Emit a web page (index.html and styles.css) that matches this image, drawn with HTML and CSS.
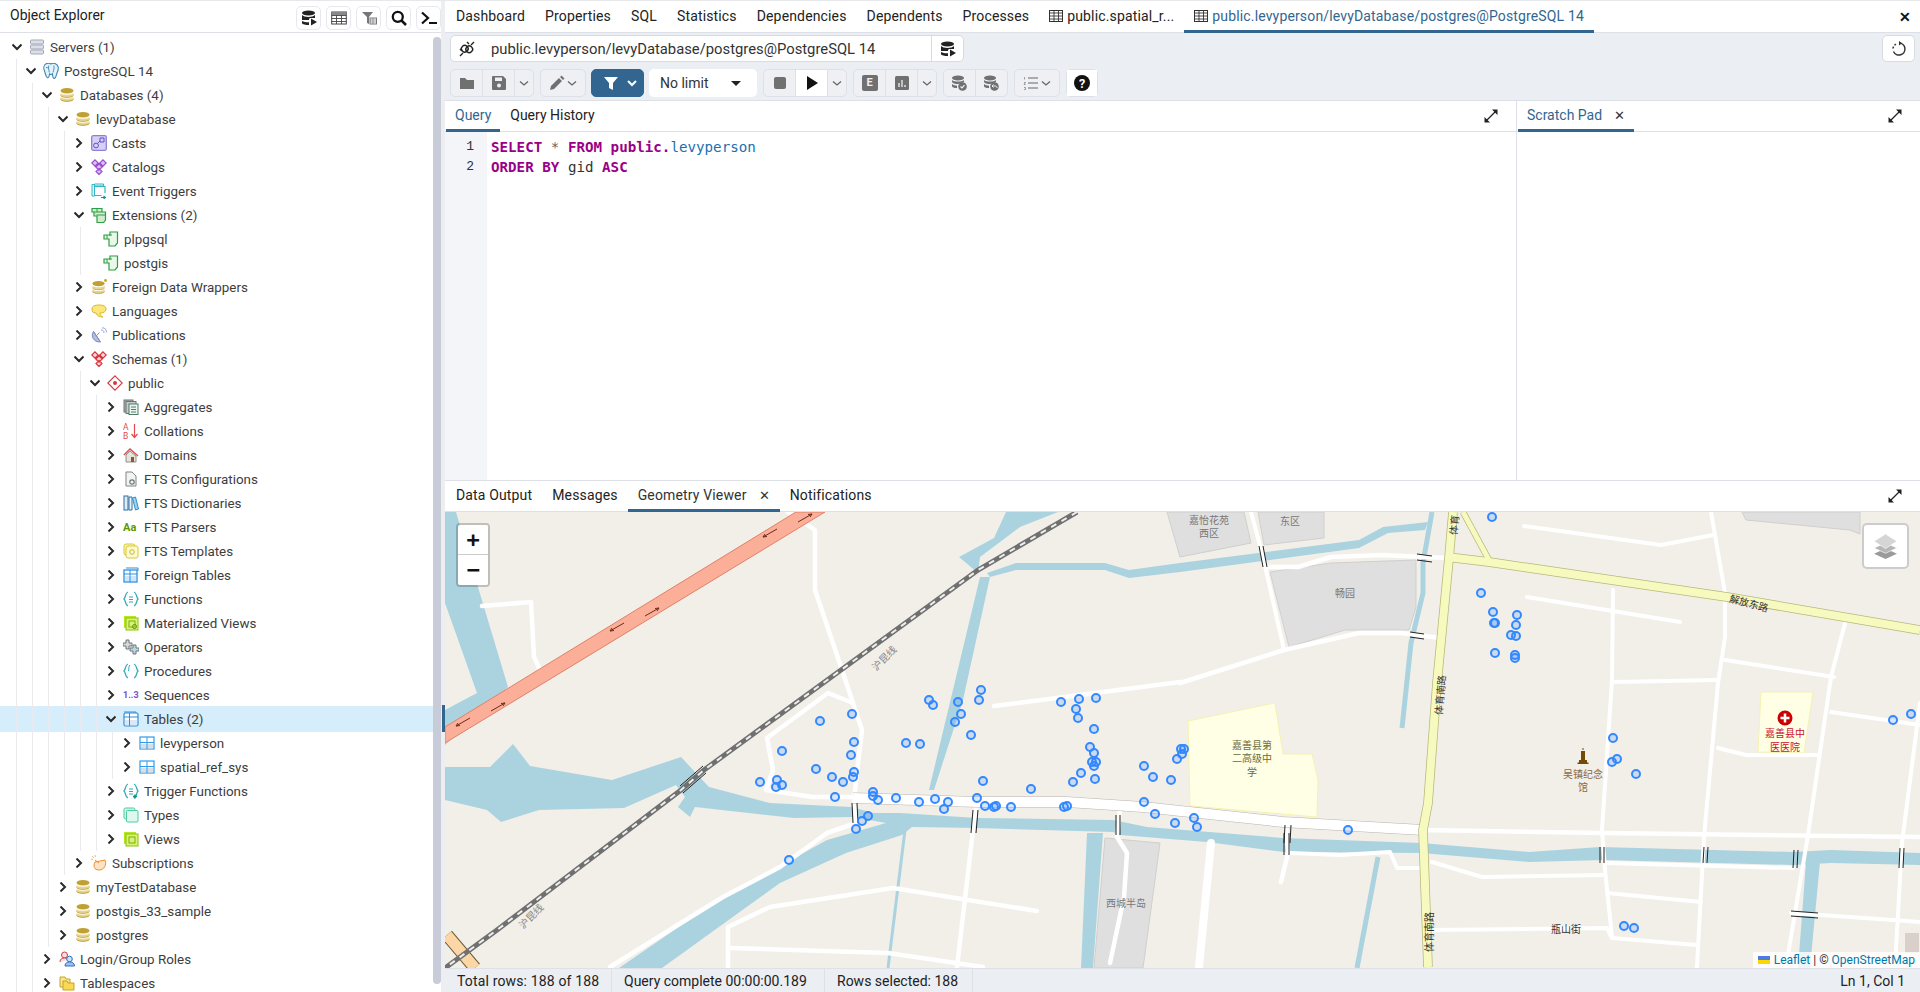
FILE: index.html
```html
<!DOCTYPE html>
<html lang="en">
<head>
    <meta charset="UTF-8">
    <title>pgAdmin 4</title>
    <link rel="stylesheet" href="styles.css">
</head>
<body>

<!-- shared icons -->
<svg class="defs" xmlns="http://www.w3.org/2000/svg">
    <symbol id="i-chev-d" viewBox="0 0 10 10"><path d="M.5 2.500L5 7l4.500-4.500" fill="none" stroke="#2b2b2b" stroke-width="2"/></symbol>
    <symbol id="i-chev-r" viewBox="0 0 10 10"><path d="M2.500.5L7 5 2.500 9.500" fill="none" stroke="#2b2b2b" stroke-width="2"/></symbol>
    <symbol id="i-servers" viewBox="0 0 16 16"><g fill="#dcdfe8" stroke="#a3a8b8"><rect x="1.500" y="1" width="13" height="4" rx="1"/><rect x="1.500" y="6" width="13" height="4" rx="1"/><rect x="1.500" y="11" width="13" height="4" rx="1"/></g></symbol>
    <symbol id="i-pg" viewBox="0 0 16 16"><path d="M3 .8C.8 1.800.3 5 1.500 8s1 5 2.500 6.300S6.300 13.500 6.500 11c1 .6 2.300.6 3 0 0 2 .6 5 2.200 4.300s1.300-3.300 2.300-5.300S16.200 4.500 14.200 2.200 9.800 0 8 .9C6.500.1 4.500 0 3 .8z" fill="#e3f2fb" stroke="#3f87b3" stroke-width="1.100"/><path d="M5.800 2.500c-.7 2.500 0 4.500.6 7M10.800 2.500c.7 2.500 0 4.500-.9 7M3 4.500c1 .2 2 .2 2.800 0" fill="none" stroke="#3f87b3" stroke-width=".9"/></symbol>
    <symbol id="i-db" viewBox="0 0 16 16"><path d="M1.500 5.500v2c0 3 13 3 13 0v-2c0 3-13 3-13 0zM1.500 9.500v2.500c0 3 13 3 13 0V9.500c0 3-13 3-13 0z" fill="#e6d48a"/><ellipse cx="8" cy="3.800" rx="6.500" ry="2.800" fill="#bfa032"/><path d="M1.500 8.500c1.500 2.400 11.500 2.400 13 0" fill="none" stroke="#bfa032"/><path d="M1.500 12.500c1.500 2.400 11.500 2.400 13 0" fill="none" stroke="#bfa032"/></symbol>
    <symbol id="i-casts" viewBox="0 0 16 16"><rect x=".7" y=".7" width="14.600" height="14.600" rx="1.500" fill="#d7d0f5" stroke="#8d7fd9" stroke-width="1.300"/><circle cx="5" cy="10.500" r="2.400" fill="none" stroke="#5e4fc0"/><path d="M9 3h4v4H9zM6.500 8.500L9 6" fill="none" stroke="#5e4fc0"/></symbol>
    <symbol id="i-catalogs" viewBox="0 0 16 16"><g fill="#dcc0f4" stroke="#9a4fd0" stroke-width="1.200"><path d="M4 .8l3.200 3.200L4 7.200.8 4zM12 .8l3.200 3.200L12 7.200 8.800 4zM8 4.800l3.200 3.200L8 11.200 4.800 8zM8 9.500l3 3-3 3-3-3z"/></g></symbol>
    <symbol id="i-trigger" viewBox="0 0 16 16"><path d="M3.500 1h9v2H3.500zM1 1.500h2.500V13H1z" fill="#e6f8fa" stroke="#2fb7c7"/><path d="M3.500 3.500h10.500V10M3.500 12.500h7" fill="none" stroke="#2fb7c7" stroke-width="1.200"/><path d="M10 14.500h4M12.500 13l2 1.500-2 1.500" fill="none" stroke="#1f8f9d" stroke-width="1.100"/></symbol>
    <symbol id="i-ext" viewBox="0 0 16 16"><path d="M1 1.500h10v3.500H1zM3 5h11.500v8l-2 2.500H6V9H3z" fill="#cfeccf" stroke="#2f9e44" stroke-width="1.200"/><path d="M6 1.500V5M5.500 8h9" stroke="#2f9e44" fill="none"/></symbol>
    <symbol id="i-extone" viewBox="0 0 16 16"><path d="M1 4h6V1h7.500v11L12 15H6V8H1z" fill="#eaf8ea" stroke="#2f9e44" stroke-width="1.200"/><path d="M4 4v4M6 4h3" stroke="#2f9e44" fill="none"/></symbol>
    <symbol id="i-fdw" viewBox="0 0 16 16"><use href="#i-db" x="0" y="1" width="15" height="15"/><circle cx="14.500" cy="1.500" r="1.400" fill="#c9a227"/></symbol>
    <symbol id="i-lang" viewBox="0 0 16 16"><path d="M1 6c0-3 3-4 7-4s7 1 7 4-3 4-6 4c0 2 1 3 3 4-3 0-6-1-7-4-3 0-4-1-4-4z" fill="#fbe77a" stroke="#d9b92a"/></symbol>
    <symbol id="i-pub" viewBox="0 0 16 16"><path d="M2.500 4.500C-.5 9 2.500 15.500 9.500 15z" fill="#b4bde0" stroke="#7f8cc4"/><path d="M2.500 4.500l7 10.500M5.500 8.500L8.500 5.500" stroke="#7f8cc4" fill="none"/><path d="M10 3c2 0 3 1 3 3M11 .8c3 0 4.500 1.500 4.500 4.500" fill="none" stroke="#9aa5d6"/></symbol>
    <symbol id="i-schemas" viewBox="0 0 16 16"><g fill="#fbd4d4" stroke="#d9363e" stroke-width="1.200"><path d="M4 .8l3.200 3.200L4 7.200.8 4zM12 .8l3.200 3.200L12 7.200 8.800 4zM8 4.800l3.200 3.200L8 11.200 4.800 8zM8 9.500l3 3-3 3-3-3z"/></g></symbol>
    <symbol id="i-public" viewBox="0 0 16 16"><path d="M8 .8L15.200 8 8 15.200.8 8z" fill="#fff" stroke="#d9363e" stroke-width="1.100"/><circle cx="8" cy="8" r="2" fill="#d9363e"/></symbol>
    <symbol id="i-agg" viewBox="0 0 16 16"><rect x="1" y="1" width="9" height="12" fill="#aeb4b4" stroke="#6b7474"/><rect x="3" y="2.500" width="10" height="12" fill="#c6cbcb" stroke="#6b7474"/><rect x="6" y="5" width="9" height="10.500" fill="#eef5ee" stroke="#4a7d6a"/><path d="M8 8h5M8 10.500h5M8 13h5" stroke="#4a7d6a"/></symbol>
    <symbol id="i-coll" viewBox="0 0 16 16"><text x="0" y="7" font-family="Roboto" font-size="8.500" fill="#e5484d">A</text><text x="0" y="15.500" font-family="Roboto" font-size="8.500" fill="#e5484d">B</text><path d="M11.500 1v13M8.500 11l3 3.500 3-3.500" fill="none" stroke="#e5484d" stroke-width="1.200"/></symbol>
    <symbol id="i-domain" viewBox="0 0 16 16"><path d="M1 8l6-6 8 7" fill="none" stroke="#d9534f" stroke-width="1.500"/><path d="M3 8l4-4 6 5v6H3z" fill="#e7e3da" stroke="#8f8f8f"/><rect x="8" y="10" width="3" height="5" fill="#8a5a2b"/></symbol>
    <symbol id="i-ftsconf" viewBox="0 0 16 16"><path d="M3 1h6l4 4v10H3z" fill="#f2f3f3" stroke="#7d8587"/><circle cx="9" cy="11" r="2.200" fill="none" stroke="#6d7577" stroke-width="1.200"/></symbol>
    <symbol id="i-ftsdict" viewBox="0 0 16 16"><rect x="1" y="1" width="4" height="14" fill="#dcecf7" stroke="#2f6f9f"/><path d="M6 2h3v13H6z" fill="#eef6fb" stroke="#2f6f9f"/><path d="M9.500 3l3-1 3 12-3 1z" fill="#9fd0ee" stroke="#2f8fc4"/></symbol>
    <symbol id="i-parser" viewBox="0 0 16 16"><text x="0" y="12" font-family="Roboto" font-weight="700" font-size="11" fill="#5c9a00">Aa</text></symbol>
    <symbol id="i-ftstpl" viewBox="0 0 16 16"><rect x="1" y="1" width="11" height="11" rx="2" fill="#fbf4b8" stroke="#d8c93a"/><rect x="3" y="3" width="12" height="12" rx="2" fill="#fdf9d0" stroke="#d8c93a"/><circle cx="9" cy="9" r="2.300" fill="none" stroke="#c9b92a"/></symbol>
    <symbol id="i-ftable" viewBox="0 0 16 16"><path d="M3 1h12v3" fill="none" stroke="#2f8fe0"/><rect x="1" y="3" width="13" height="12" fill="#fff" stroke="#2f8fe0" stroke-width="1.300"/><rect x="2" y="9" width="11" height="5" fill="#cfe6fa"/><path d="M1 7h13M7 3v12" stroke="#2f8fe0"/></symbol>
    <symbol id="i-func" viewBox="0 0 16 16"><path d="M5 1C2 2 3 6 1 8c2 2 1 6 4 7M11 1c3 1 2 5 4 7-2 2-1 6-4 7" fill="none" stroke="#2fa7b8" stroke-width="1.200"/><path d="M6 6h4M6 8.500h4M6 11h4" stroke="#2fa7b8"/></symbol>
    <symbol id="i-proc" viewBox="0 0 16 16"><path d="M5 1C2 2 3 6 1 8c2 2 1 6 4 7M11 1c3 1 2 5 4 7-2 2-1 6-4 7" fill="none" stroke="#2fa7b8" stroke-width="1.200"/><path d="M7 2C5.500 3 6 6 5.500 8" fill="none" stroke="#2fa7b8"/></symbol>
    <symbol id="i-tfunc" viewBox="0 0 16 16"><use href="#i-func"/><path d="M12 11.500v4M10 13.500h4" stroke="#0f8f7f" stroke-width="1.500"/></symbol>
    <symbol id="i-mview" viewBox="0 0 16 16"><rect x="1" y="1" width="12" height="12" fill="#b6e61e"/><rect x="3" y="3" width="12" height="12" fill="#d7f27a" stroke="#8fc400"/><rect x="6" y="6" width="6" height="6" fill="none" stroke="#7bb000"/><circle cx="11.500" cy="11.500" r="2" fill="none" stroke="#5f8f00"/></symbol>
    <symbol id="i-ops" viewBox="0 0 16 16"><path d="M3 1h3v3h3v3H6v3H3V7H0V4h3z" fill="#d5d8d8" stroke="#6e7676"/><path d="M10 6h3v3h3v3h-3v3h-3v-3H7V9h3z" fill="#b9d6e4" stroke="#6e7676"/></symbol>
    <symbol id="i-seq" viewBox="0 0 16 16"><text x="0" y="11" font-family="Roboto" font-size="9" font-weight="700" fill="#7a4fd0">1..3</text></symbol>
    <symbol id="i-tables" viewBox="0 0 16 16"><path d="M1 1h12v2" fill="none" stroke="#2f8fe0"/><rect x="1" y="2" width="14" height="13" rx="1.500" fill="#fff" stroke="#2f8fe0" stroke-width="1.200"/><rect x="2" y="9" width="12" height="5" fill="#dbe9f6"/><path d="M1 6h14M6.500 2v13" stroke="#2f8fe0"/></symbol>
    <symbol id="i-table" viewBox="0 0 16 16"><rect x="1" y="2" width="14" height="12" fill="#fff" stroke="#2f9be8" stroke-width="1.200"/><rect x="2" y="9" width="12" height="4.500" fill="#d9dee6"/><path d="M1 7.500h14M8 2v12" stroke="#2f9be8"/></symbol>
    <symbol id="i-types" viewBox="0 0 16 16"><rect x="1" y="1" width="11" height="11" rx="1.500" fill="#cdf3e2" stroke="#4fcba0"/><rect x="3.500" y="3.500" width="11.500" height="11.500" rx="1" fill="#dff8ed" stroke="#4fcba0"/></symbol>
    <symbol id="i-views" viewBox="0 0 16 16"><rect x="1" y="1" width="12" height="12" fill="#b6e61e"/><rect x="3" y="3" width="12" height="12" fill="#d7f27a" stroke="#8fc400"/><rect x="6" y="6" width="6" height="6" fill="none" stroke="#7bb000"/></symbol>
    <symbol id="i-subs" viewBox="0 0 16 16"><path d="M4 7l10-2c2 5-1 10-6 10S2 11 4 7z" fill="#fde3c4" stroke="#ee8e33"/><path d="M8 8l-4-3" stroke="#ee8e33"/><path d="M1 1l2 2M4 0l.5 2M0 4l2 .5" stroke="#f3b46f"/></symbol>
    <symbol id="i-roles" viewBox="0 0 16 16"><circle cx="5.500" cy="4" r="3" fill="#fbe0e0" stroke="#d9363e"/><path d="M1 11c0-3 2-4 4.500-4S9 8 9 9" fill="#fbe0e0" stroke="#d9363e"/><circle cx="10.500" cy="8" r="2.800" fill="#cfe3f7" stroke="#2f6fc4"/><path d="M6 15c0-3 2-4 4.500-4s5 1 5 4z" fill="#9cc4ee" stroke="#2f6fc4"/></symbol>
    <symbol id="i-tspace" viewBox="0 0 16 16"><path d="M1 2h5l1 2h4v8H1z" fill="#f9e58a" stroke="#c9a227"/><path d="M4 6h4l1 2h6v7H4z" fill="#f6d955" stroke="#c9a227"/></symbol>

    <symbol id="t-dbrun" viewBox="0 0 16 16"><ellipse cx="7.500" cy="3" rx="6.500" ry="2.500" fill="#222"/><path d="M1 5c2 2.500 11 2.500 13 0v3H9l-1 1v1H1zM1 11c2 1 5 1.400 7 1.200V15c-3 0-7-.5-7-2z" fill="#222"/><path d="M10 8.500l6 3.500-6 3.500z" fill="#222"/></symbol>
    <symbol id="t-grid" viewBox="0 0 16 16"><rect x=".7" y="2" width="14.600" height="12" fill="none" stroke="#444"/><path d="M.7 5.500h14.600M.7 8.500h14.600M.7 11.500h14.600M5.500 2v12M10.500 2v12" stroke="#444" stroke-width=".9"/><rect x=".7" y="2" width="14.600" height="3" fill="#888"/></symbol>
    <symbol id="t-filter" viewBox="0 0 16 16"><path d="M1 2h11L8 7v7l-2-1V7z" fill="#777"/><rect x="9" y="8" width="6.500" height="6" fill="#fff" stroke="#777"/><path d="M9 10h6.500M9 12h6.500M12 8v6" stroke="#777" stroke-width=".7"/></symbol>
    <symbol id="t-search" viewBox="0 0 16 16"><circle cx="6.800" cy="6.800" r="5" fill="none" stroke="#111" stroke-width="2.300"/><path d="M10.500 10.500l4.500 4.500" stroke="#111" stroke-width="2.500"/></symbol>
    <symbol id="t-psql" viewBox="0 0 16 16"><path d="M1 2.500L7 8l-6 5.500" fill="none" stroke="#111" stroke-width="2.200"/><path d="M8 13h8" stroke="#111" stroke-width="2"/></symbol>
    <symbol id="t-plug" viewBox="0 0 16 16"><g fill="none" stroke="#222" stroke-width="1.400"><path d="M1 15l3-3M15 1l-3 3"/><rect x="2.500" y="4.500" width="6.500" height="6.500" rx="3" transform="rotate(-45 5.750 7.750)"/><rect x="7" y="5" width="6.500" height="6.500" rx="3" transform="rotate(-45 10.250 8.250)"/><path d="M1 8l2 2M8 1l2 2"/></g></symbol>
    <symbol id="t-folder" viewBox="0 0 16 16"><path d="M1 3h5l2 2h7v9H1z" fill="#707070"/></symbol>
    <symbol id="t-save" viewBox="0 0 16 16"><path d="M2 1h10l3 3v10a1 1 0 0 1-1 1H2a1 1 0 0 1-1-1V2a1 1 0 0 1 1-1z" fill="#707070"/><rect x="4" y="2.500" width="7" height="3.500" fill="#eef0f4"/><circle cx="8" cy="10.500" r="2" fill="#eef0f4"/></symbol>
    <symbol id="t-caret" viewBox="0 0 10 10"><path d="M1 3.500l4 3.500 4-3.500" fill="none" stroke="#666" stroke-width="1.300"/></symbol>
    <symbol id="t-pencil" viewBox="0 0 16 16"><path d="M1 15l1-4 8-8 3 3-8 8zM11 2l1.500-1.500L15.500 3.500 14 5z" fill="#707070"/></symbol>
    <symbol id="t-funnel" viewBox="0 0 16 16"><path d="M1 2h14l-5 6v7l-4-2V8z" fill="#fff"/></symbol>
    <symbol id="t-chart" viewBox="0 0 16 16"><rect x="1" y="1" width="14" height="14" rx="1.500" fill="#707070"/><path d="M5 8v4M8 5v7M11 10v2" stroke="#eef0f4" stroke-width="1.300"/></symbol>
    <symbol id="t-dbok" viewBox="0 0 16 16"><ellipse cx="7" cy="3" rx="6" ry="2.500" fill="#707070"/><path d="M1 5c2 2 10 2 12 0v2c-2 1-5 2-6 2-3 0-5-.6-6-2zM1 9c1.500 1.200 3 1.500 5 1.500V13c-3 0-5-.6-5-2z" fill="#707070"/><circle cx="11.500" cy="11.500" r="4.300" fill="#707070"/><path d="M9.500 11.500l1.500 1.500 2.500-2.800" fill="none" stroke="#eef0f4" stroke-width="1.200"/></symbol>
    <symbol id="t-dbundo" viewBox="0 0 16 16"><ellipse cx="7" cy="3" rx="6" ry="2.500" fill="#707070"/><path d="M1 5c2 2 10 2 12 0v2c-2 1-5 2-6 2-3 0-5-.6-6-2zM1 9c1.500 1.200 3 1.500 5 1.500V13c-3 0-5-.6-5-2z" fill="#707070"/><circle cx="11.500" cy="11.500" r="4.300" fill="#707070"/><path d="M9 11h3.500c1 0 1.500.8 1.500 2M9 11l1.500-1.500M9 11l1.500 1.500" fill="none" stroke="#eef0f4"/></symbol>
    <symbol id="t-list" viewBox="0 0 16 16"><path d="M5 3h10M5 8h10M5 13h10" stroke="#666" stroke-width="1.100"/><path d="M1.500 2v2.500M1 7.500h1.500L1 9.500h1.500M1 12.500h1.500v2H1" fill="none" stroke="#666" stroke-width=".6"/></symbol>
    <symbol id="t-help" viewBox="0 0 16 16"><circle cx="8" cy="8" r="8" fill="#111"/><text x="8" y="12.500" text-anchor="middle" font-family="Roboto" font-weight="700" font-size="12.500" fill="#fff">?</text></symbol>
    <symbol id="t-refresh" viewBox="0 0 16 16"><path d="M8 2a6 6 0 1 1-5.500 8.500" fill="none" stroke="#333" stroke-width="1.500"/><path d="M2 7.500a6 6 0 0 1 3-4.500" fill="none" stroke="#333" stroke-width="1.500" stroke-dasharray="2 1.500"/><path d="M8 0l3 2.200L8 4.500z" fill="#333"/></symbol>
    <symbol id="t-expand" viewBox="0 0 16 16"><path d="M3 13L13 3" stroke="#222" stroke-width="1.300"/><path d="M9 1.500h5.500V7zM1.500 9v5.500H7z" fill="#222"/></symbol>
    <symbol id="t-tabgrid" viewBox="0 0 14 14"><rect x=".5" y="1.500" width="13" height="11" fill="none" stroke="#333"/><path d="M.5 4h13M.5 7h13M.5 10h13M5 1.500v11M9.500 1.500v11" stroke="#333" stroke-width=".9"/></symbol>
</svg>

<div class="app">
    <!-- left panel -->
    <aside class="explorer">
        <div class="explorer-head">
            <span class="explorer-title">Object Explorer</span>
            <div class="explorer-tools">
                <button class="tool"><svg><use href="#t-dbrun"/></svg></button>
                <button class="tool"><svg><use href="#t-grid"/></svg></button>
                <button class="tool"><svg><use href="#t-filter"/></svg></button>
                <button class="tool"><svg><use href="#t-search"/></svg></button>
                <button class="tool"><svg><use href="#t-psql"/></svg></button>
            </div>
        </div>
        <div class="explorer-body">
            <div class="tree">
                <div class="row lv0"><svg class="chev"><use href="#i-chev-d"/></svg><svg class="ico"><use href="#i-servers"/></svg>Servers (1)</div>
                <div class="row lv1"><svg class="chev"><use href="#i-chev-d"/></svg><svg class="ico"><use href="#i-pg"/></svg>PostgreSQL 14</div>
                <div class="row lv2"><svg class="chev"><use href="#i-chev-d"/></svg><svg class="ico"><use href="#i-db"/></svg>Databases (4)</div>
                <div class="row lv3"><svg class="chev"><use href="#i-chev-d"/></svg><svg class="ico"><use href="#i-db"/></svg>levyDatabase</div>
                <div class="row lv4"><svg class="chev"><use href="#i-chev-r"/></svg><svg class="ico"><use href="#i-casts"/></svg>Casts</div>
                <div class="row lv4"><svg class="chev"><use href="#i-chev-r"/></svg><svg class="ico"><use href="#i-catalogs"/></svg>Catalogs</div>
                <div class="row lv4"><svg class="chev"><use href="#i-chev-r"/></svg><svg class="ico"><use href="#i-trigger"/></svg>Event Triggers</div>
                <div class="row lv4"><svg class="chev"><use href="#i-chev-d"/></svg><svg class="ico"><use href="#i-ext"/></svg>Extensions (2)</div>
                <div class="row leaf"><svg class="ico"><use href="#i-extone"/></svg>plpgsql</div>
                <div class="row leaf"><svg class="ico"><use href="#i-extone"/></svg>postgis</div>
                <div class="row lv4"><svg class="chev"><use href="#i-chev-r"/></svg><svg class="ico"><use href="#i-fdw"/></svg>Foreign Data Wrappers</div>
                <div class="row lv4"><svg class="chev"><use href="#i-chev-r"/></svg><svg class="ico"><use href="#i-lang"/></svg>Languages</div>
                <div class="row lv4"><svg class="chev"><use href="#i-chev-r"/></svg><svg class="ico"><use href="#i-pub"/></svg>Publications</div>
                <div class="row lv4"><svg class="chev"><use href="#i-chev-d"/></svg><svg class="ico"><use href="#i-schemas"/></svg>Schemas (1)</div>
                <div class="row lv5"><svg class="chev"><use href="#i-chev-d"/></svg><svg class="ico"><use href="#i-public"/></svg>public</div>
                <div class="row lv6"><svg class="chev"><use href="#i-chev-r"/></svg><svg class="ico"><use href="#i-agg"/></svg>Aggregates</div>
                <div class="row lv6"><svg class="chev"><use href="#i-chev-r"/></svg><svg class="ico"><use href="#i-coll"/></svg>Collations</div>
                <div class="row lv6"><svg class="chev"><use href="#i-chev-r"/></svg><svg class="ico"><use href="#i-domain"/></svg>Domains</div>
                <div class="row lv6"><svg class="chev"><use href="#i-chev-r"/></svg><svg class="ico"><use href="#i-ftsconf"/></svg>FTS Configurations</div>
                <div class="row lv6"><svg class="chev"><use href="#i-chev-r"/></svg><svg class="ico"><use href="#i-ftsdict"/></svg>FTS Dictionaries</div>
                <div class="row lv6"><svg class="chev"><use href="#i-chev-r"/></svg><svg class="ico"><use href="#i-parser"/></svg>FTS Parsers</div>
                <div class="row lv6"><svg class="chev"><use href="#i-chev-r"/></svg><svg class="ico"><use href="#i-ftstpl"/></svg>FTS Templates</div>
                <div class="row lv6"><svg class="chev"><use href="#i-chev-r"/></svg><svg class="ico"><use href="#i-ftable"/></svg>Foreign Tables</div>
                <div class="row lv6"><svg class="chev"><use href="#i-chev-r"/></svg><svg class="ico"><use href="#i-func"/></svg>Functions</div>
                <div class="row lv6"><svg class="chev"><use href="#i-chev-r"/></svg><svg class="ico"><use href="#i-mview"/></svg>Materialized Views</div>
                <div class="row lv6"><svg class="chev"><use href="#i-chev-r"/></svg><svg class="ico"><use href="#i-ops"/></svg>Operators</div>
                <div class="row lv6"><svg class="chev"><use href="#i-chev-r"/></svg><svg class="ico"><use href="#i-proc"/></svg>Procedures</div>
                <div class="row lv6"><svg class="chev"><use href="#i-chev-r"/></svg><svg class="ico"><use href="#i-seq"/></svg>Sequences</div>
                <div class="row lv6 selected"><svg class="chev"><use href="#i-chev-d"/></svg><svg class="ico"><use href="#i-tables"/></svg>Tables (2)</div>
                <div class="row lv7"><svg class="chev"><use href="#i-chev-r"/></svg><svg class="ico"><use href="#i-table"/></svg>levyperson</div>
                <div class="row lv7"><svg class="chev"><use href="#i-chev-r"/></svg><svg class="ico"><use href="#i-table"/></svg>spatial_ref_sys</div>
                <div class="row lv6"><svg class="chev"><use href="#i-chev-r"/></svg><svg class="ico"><use href="#i-tfunc"/></svg>Trigger Functions</div>
                <div class="row lv6"><svg class="chev"><use href="#i-chev-r"/></svg><svg class="ico"><use href="#i-types"/></svg>Types</div>
                <div class="row lv6"><svg class="chev"><use href="#i-chev-r"/></svg><svg class="ico"><use href="#i-views"/></svg>Views</div>
                <div class="row lv4"><svg class="chev"><use href="#i-chev-r"/></svg><svg class="ico"><use href="#i-subs"/></svg>Subscriptions</div>
                <div class="row lv3"><svg class="chev"><use href="#i-chev-r"/></svg><svg class="ico"><use href="#i-db"/></svg>myTestDatabase</div>
                <div class="row lv3"><svg class="chev"><use href="#i-chev-r"/></svg><svg class="ico"><use href="#i-db"/></svg>postgis_33_sample</div>
                <div class="row lv3"><svg class="chev"><use href="#i-chev-r"/></svg><svg class="ico"><use href="#i-db"/></svg>postgres</div>
                <div class="row lv2"><svg class="chev"><use href="#i-chev-r"/></svg><svg class="ico"><use href="#i-roles"/></svg>Login/Group Roles</div>
                <div class="row lv2"><svg class="chev"><use href="#i-chev-r"/></svg><svg class="ico"><use href="#i-tspace"/></svg>Tablespaces</div>
            </div>
            <div class="scroll-thumb"></div>
        </div>
    </aside>

    <div class="splitter"><div class="splitter-mark"></div></div>

    <main class="main">
        <nav class="tabs top-tabs">
            <span class="tab">Dashboard</span>
            <span class="tab">Properties</span>
            <span class="tab">SQL</span>
            <span class="tab">Statistics</span>
            <span class="tab">Dependencies</span>
            <span class="tab">Dependents</span>
            <span class="tab">Processes</span>
            <span class="tab"><svg class="tab-ico"><use href="#t-tabgrid"/></svg>public.spatial_r...</span>
            <span class="tab active"><svg class="tab-ico"><use href="#t-tabgrid"/></svg>public.levyperson/levyDatabase/postgres@PostgreSQL 14</span>
            <span class="top-close">✕</span>
        </nav>

        <div class="toolbars">
            <div class="conn-row">
                <div class="conn">
                    <button class="btn conn-btn"><svg class="i16"><use href="#t-plug"/></svg></button>
                    <span class="conn-name">public.levyperson/levyDatabase/postgres@PostgreSQL 14</span>
                    <button class="btn conn-btn right"><svg class="i16"><use href="#t-dbrun"/></svg></button>
                </div>
                <button class="btn refresh"><svg class="i16"><use href="#t-refresh"/></svg></button>
            </div>
            <div class="tool-row">
                <div class="group g1">
                    <button class="btn"><svg class="i16"><use href="#t-folder"/></svg></button>
                    <button class="btn"><svg class="i16"><use href="#t-save"/></svg></button>
                    <button class="btn caret"><svg class="i10"><use href="#t-caret"/></svg></button>
                </div>
                <div class="group g2">
                    <button class="btn wide"><svg class="i16"><use href="#t-pencil"/></svg><svg class="i10"><use href="#t-caret"/></svg></button>
                </div>
                <div class="group g3 blue">
                    <svg class="i16"><use href="#t-funnel"/></svg>
                    <svg class="i10" viewBox="0 0 10 10"><path d="M1 3l4 4 4-4" fill="none" stroke="#fff" stroke-width="2"/></svg>
                </div>
                <div class="limit">No limit<span class="limit-caret"></span></div>
                <div class="group g4">
                    <button class="btn"><span class="stop"></span></button>
                    <button class="btn lit"><svg class="i16" viewBox="0 0 16 16"><path d="M3 1l11 7-11 7z" fill="#111"/></svg></button>
                    <button class="btn caret"><svg class="i10"><use href="#t-caret"/></svg></button>
                </div>
                <div class="group g5">
                    <button class="btn"><span class="e-box">E</span></button>
                    <button class="btn"><svg class="i16"><use href="#t-chart"/></svg></button>
                    <button class="btn caret"><svg class="i10"><use href="#t-caret"/></svg></button>
                </div>
                <div class="group g6">
                    <button class="btn"><svg class="i16"><use href="#t-dbok"/></svg></button>
                    <button class="btn"><svg class="i16"><use href="#t-dbundo"/></svg></button>
                </div>
                <div class="group g7">
                    <button class="btn wide"><svg class="i16"><use href="#t-list"/></svg><svg class="i10"><use href="#t-caret"/></svg></button>
                </div>
                <div class="group g8 lit">
                    <button class="btn lit"><svg class="i16"><use href="#t-help"/></svg></button>
                </div>
            </div>
        </div>

        <section class="query-area">
            <div class="query-pane">
                <div class="tabs pane-tabs">
                    <span class="tab active">Query</span>
                    <span class="tab">Query History</span>
                    <svg class="expand"><use href="#t-expand"/></svg>
                </div>
                <div class="editor">
                    <div class="gutter"><div>1</div><div>2</div></div>
                    <pre class="code"><span class="kw">SELECT</span> <span class="op">*</span> <span class="kw">FROM</span> <span class="kw">public</span><span class="kw">.</span><span class="id">levyperson</span>
<span class="kw">ORDER BY</span> gid <span class="kw">ASC</span></pre>
                </div>
            </div>
            <div class="scratch-pane">
                <div class="tabs pane-tabs">
                    <span class="tab active">Scratch Pad<span class="tab-x">✕</span></span>
                    <svg class="expand"><use href="#t-expand"/></svg>
                </div>
            </div>
        </section>

        <section class="result-area">
            <div class="tabs pane-tabs result-tabs">
                <span class="tab">Data Output</span>
                <span class="tab">Messages</span>
                <span class="tab active">Geometry Viewer<span class="tab-x">✕</span></span>
                <span class="tab">Notifications</span>
                <svg class="expand"><use href="#t-expand"/></svg>
            </div>
            <div class="map">
                <svg class="map-svg" viewBox="445 512 1475 456" xmlns="http://www.w3.org/2000/svg">
                    <rect x="445" y="512" width="1475" height="456" fill="#f2efe9"/>
                    <!-- landuse -->
                    <g class="residential">
                        <path d="M1167 512L1180 557 1251 543 1244 512z"/>
                        <path d="M1258 512H1324V538L1264 545z"/>
                        <path d="M1270 572L1331 563 1416 560V607L1409 630H1345L1289 647z"/>
                        <path d="M1742 512L1746 520 1850 530 1860 534V512z"/>
                        <path d="M1105 838L1160 843 1143 968H1094z"/>
                    </g>
                    <g class="campus">
                        <path d="M1188 721L1275 703 1283 754H1312L1318 780 1317 817 1190 806z"/>
                        <path d="M1761 692H1813L1804 753 1758 752z"/>
                    </g>
                    <rect x="1905" y="933" width="14" height="20" fill="#d9d0c9"/>
                    <!-- water -->
                    <g class="water">
                        <path d="M445 512H456L478 587 508 687 445 745V710L477 693 445 603z"/>
                        <path d="M445 767H490L513 744 530 766 612 780 681 757 709 787 770 803 851 807 874 813 900 813 977 818 1113 820 1147 827 1283 838 1421 843 1529 852 1600 847 1793 852 1831 850 1920 853V865L1831 863 1793 865 1605 860 1529 862 1421 853 1284 852 1207 842 1120 835 1113 832 977 828 912 827 902 835 846 853 780 883 662 968H619L718 900 827 840 886 823 853 817 794 818 695 807 690 817 678 807 685 797 676 785 624 808 539 810 501 822 487 810 445 800z"/>
                        <path d="M1087 833H1103L1093 968H1081z"/>
                        <path d="M1806 862H1820L1810 968H1798z"/>
                        <path d="M980 577H990L963 700 934 790 929 790z"/>
                        <path d="M1006 512L994 538 959 557 978 573 980 557 1020 527 1058 512z"/>
                        <path d="M987 573L1016 563H1105L1129 570 1180 563 1359 540 1383 527 1428 522 1425 530 1388 533 1359 548 1180 572 1129 578 1105 570H1016L990 577z"/>
                    </g>
                    <g class="stream">
                        <path d="M1432 512L1423 563V593L1411 643 1402 728" stroke-width="5"/>
                        <path d="M905 830L888 968" stroke-width="3"/>
                        <path d="M1378 857L1357 968" stroke-width="5"/>
                    </g>
                    <!-- roads -->
                    <g class="road w5">
                        <path d="M788 512L815 530V590L842 670 853 703 862 730 858 763 854 800 856 823"/>
                        <path d="M856 823L827 833 780 867 723 897 610 967"/>
                        <path d="M482 606L531 602 534 657 540 670"/>
                        <path d="M853 703L828 693 767 738 773 770 766 790 813 797H853"/>
                        <path d="M1267 567H1298L1331 557 1383 555 1447 558"/>
                        <path d="M1180 683L1284 650 1359 633H1402L1440 638"/>
                        <path d="M994 706L1180 682"/>
                        <path d="M976 807L973 830 957 967"/>
                        <path d="M1120 810L1117 837 1127 853 1124 897 1110 963"/>
                        <path d="M728 967V927L770 907 893 888 1037 911"/>
                        <path d="M730 948L888 953 983 967"/>
                        <path d="M1286 827L1288 853 1281 882"/>
                        <path d="M1423 830L1605 833 1920 837"/>
                    </g>
                    <g class="road w4">
                        <path d="M1251 512L1263 557 1284 650"/>
                        <path d="M1524 526L1661 545 1713 535"/>
                        <path d="M1527 597L1680 622"/>
                        <path d="M1711 512L1725 593V637L1718 683 1704 837 1697 967"/>
                        <path d="M1613 590L1612 680 1602 830 1605 870 1612 937"/>
                        <path d="M1614 682L1718 680"/>
                        <path d="M1725 660L1834 677"/>
                        <path d="M1845 623L1831 677 1808 835 1786 967"/>
                        <path d="M1718 748L1746 755H1819"/>
                        <path d="M1831 712L1920 725"/>
                        <path d="M1920 703L1902 843 1895 967"/>
                        <path d="M1432 862L1482 877 1602 875"/>
                        <path d="M1605 863L1793 868"/>
                        <path d="M1607 893L1701 902"/>
                        <path d="M1432 930L1607 928 1612 938 1697 945"/>
                        <path d="M1791 913L1893 920 1920 922"/>
                        <path d="M1291 853L1340 855 1390 852 1397 868H1425"/>
                    </g>
                    <path class="road-wide" d="M853 798L977 802H1067L1143 807 1283 822 1423 830"/>
                    <path class="road-wide-in" d="M853 798L977 802H1067L1143 807 1283 822 1423 830"/>
                    <path class="road-white" d="M1211 843L1199 967"/>
                    <!-- bridges -->
                    <path class="bridge" d="M852 803L853 823M857 803L858 823M973 810L971 833M978 810L976 833M1116 815V835M1120 815V835M1284 833V855M1289 833V855M1285 825L1284 843M1291 825L1290 843M1421 833V858M1426 833V858M1600 847V863M1604 847V863M1704 847L1703 863M1708 847L1707 863M1794 850L1793 868M1798 850L1797 868M1900 848L1899 868M1904 848L1903 868M1259 546L1263 567M1263 546L1267 567M1417 554L1432 556M1417 560L1432 562M1410 632L1424 634M1410 637L1424 639M1791 911L1818 913M1791 916L1818 918"/>
                    <!-- trunk roads -->
                    <g class="trunk">
                        <path class="trunk-case" d="M1453 512L1449 558 1437 683 1428 803 1423 830 1428 967"/>
                        <path class="trunk-case thin" d="M1463 512L1489 560"/>
                        <path class="trunk-case" d="M1447 557L1489 562 1727 597 1920 630"/>
                        <path class="trunk-fill" d="M1453 512L1449 558 1437 683 1428 803 1423 830 1428 967"/>
                        <path class="trunk-fill thin" d="M1463 512L1489 560"/>
                        <path class="trunk-fill" d="M1447 557L1489 562 1727 597 1920 630"/>
                    </g>
                    <path class="motorway" d="M445 727L796 512H825L445 743z"/>
                    <g class="mw-arrows">
                        <path d="M470 718L456 726M456 726l4 -.5M456 726l2 -3"/>
                        <path d="M491 711L505 703M505 703l-4 .5M505 703l-2 3"/>
                        <path d="M624 623L610 631M610 631l4 -.5M610 631l2 -3"/>
                        <path d="M645 616L659 608M659 608l-4 .5M659 608l-2 3"/>
                        <path d="M777 529L763 537M763 537l4 -.5M763 537l2 -3"/>
                        <path d="M798 522L812 514M812 514l-4 .5M812 514l-2 3"/>
                    </g>
                    <path class="trunk-link" d="M447 935L475 968"/>
                    <path class="trunk-link-in" d="M447 935L475 968"/>
                    <!-- railway -->
                    <path class="rail" d="M1077 512L978 570 841 670 704 770 681 790 497 930 445 968"/>
                    <path class="rail-dash" d="M1077 512L978 570 841 670 704 770 681 790 497 930 445 968"/>
                    <path class="bridge" d="M680 786L703 766M683 793L706 773"/>
                    <!-- labels -->
                    <text class="lbl gray" x="1209" y="524">嘉怡花苑</text>
                    <text class="lbl gray" x="1209" y="537">西区</text>
                    <text class="lbl gray" x="1290" y="525">东区</text>
                    <text class="lbl gray" x="1345" y="597">畅园</text>
                    <text class="lbl gray" x="1126" y="907">西城半岛</text>
                    <text class="lbl school" x="1252" y="749">嘉善县第</text>
                    <text class="lbl school" x="1252" y="762">二高级中</text>
                    <text class="lbl school" x="1252" y="776">学</text>
                    <text class="lbl dark" transform="rotate(15 1749 603)" x="1749" y="607">解放东路</text>
                    <text class="lbl dark" transform="rotate(-85 1440 695)" x="1440" y="699">体育南路</text>
                    <text class="lbl dark" transform="rotate(-90 1429 932)" x="1429" y="936">体育南路</text>
                    <text class="lbl dark" transform="rotate(-85 1454 525)" x="1454" y="529">体育</text>
                    <text class="lbl dark" x="1566" y="933">瓶山街</text>
                    <text class="lbl brown" x="1583" y="778">吴镇纪念</text>
                    <text class="lbl brown" x="1583" y="791">馆</text>
                    <text class="lbl red" x="1785" y="737">嘉善县中</text>
                    <text class="lbl red" x="1785" y="751">医医院</text>
                    <text class="lbl rail-lbl" transform="rotate(-45 884 658)" x="884" y="662">沪昆线</text>
                    <text class="lbl rail-lbl" transform="rotate(-45 531 916)" x="531" y="920">沪昆线</text>
                    <path d="M1581 751h4v9h-4zM1582.500 750h1v-2h-1zM1579 760h8v3h-8zM1577.500 762.500h11v1.500h-11z" fill="#734a08"/>
                    <circle cx="1785" cy="718" r="7.500" fill="#c00"/>
                    <path d="M1785 713.500v9M1780.500 718h9" stroke="#fff" stroke-width="2.500"/>
                    <!-- query result points -->
                    <g class="markers">
                        <circle cx="929" cy="700" r="4"/><circle cx="933" cy="705" r="4"/><circle cx="958" cy="702" r="4"/><circle cx="981" cy="690" r="4"/><circle cx="979" cy="700" r="4"/><circle cx="961" cy="714" r="4"/><circle cx="955" cy="722" r="4"/><circle cx="971" cy="735" r="4"/><circle cx="906" cy="743" r="4"/><circle cx="920" cy="744" r="4"/>
                        <circle cx="1061" cy="702" r="4"/><circle cx="1079" cy="699" r="4"/><circle cx="1096" cy="698" r="4"/><circle cx="1076" cy="709" r="4"/><circle cx="1078" cy="718" r="4"/><circle cx="1094" cy="729" r="4"/><circle cx="1090" cy="747" r="4"/><circle cx="1094" cy="753" r="4"/><circle cx="1092" cy="762" r="4"/><circle cx="1096" cy="762" r="4"/><circle cx="1094" cy="766" r="4"/><circle cx="1081" cy="773" r="4"/><circle cx="1073" cy="782" r="4"/><circle cx="1095" cy="779" r="4"/>
                        <circle cx="983" cy="781" r="4"/><circle cx="1031" cy="789" r="4"/><circle cx="977" cy="798" r="4"/><circle cx="935" cy="799" r="4"/><circle cx="919" cy="802" r="4"/><circle cx="948" cy="802" r="4"/><circle cx="944" cy="809" r="4"/><circle cx="985" cy="806" r="4"/><circle cx="994" cy="807" r="4"/><circle cx="996" cy="806" r="4"/><circle cx="1011" cy="807" r="4"/><circle cx="1064" cy="807" r="4"/><circle cx="1067" cy="806" r="4"/>
                        <circle cx="1144" cy="766" r="4"/><circle cx="1153" cy="777" r="4"/><circle cx="1171" cy="780" r="4"/><circle cx="1177" cy="759" r="4"/><circle cx="1182" cy="754" r="4"/><circle cx="1181" cy="749" r="4"/><circle cx="1184" cy="749" r="4"/><circle cx="1144" cy="802" r="4"/><circle cx="1155" cy="814" r="4"/><circle cx="1175" cy="823" r="4"/><circle cx="1194" cy="818" r="4"/><circle cx="1197" cy="827" r="4"/><circle cx="1348" cy="830" r="4"/>
                        <circle cx="852" cy="714" r="4"/><circle cx="820" cy="721" r="4"/><circle cx="854" cy="742" r="4"/><circle cx="782" cy="751" r="4"/><circle cx="851" cy="755" r="4"/><circle cx="816" cy="769" r="4"/><circle cx="854" cy="772" r="4"/><circle cx="832" cy="777" r="4"/><circle cx="843" cy="782" r="4"/><circle cx="853" cy="777" r="4"/><circle cx="760" cy="782" r="4"/><circle cx="777" cy="780" r="4"/><circle cx="782" cy="785" r="4"/><circle cx="776" cy="787" r="4"/><circle cx="835" cy="797" r="4"/><circle cx="873" cy="792" r="4"/><circle cx="873" cy="796" r="4"/><circle cx="878" cy="800" r="4"/><circle cx="896" cy="798" r="4"/><circle cx="868" cy="816" r="4"/><circle cx="862" cy="821" r="4"/><circle cx="856" cy="829" r="4"/><circle cx="789" cy="860" r="4"/>
                        <circle cx="1492" cy="517" r="4"/><circle cx="1481" cy="593" r="4"/><circle cx="1493" cy="612" r="4"/><circle cx="1494" cy="623" r="4"/><circle cx="1495" cy="623" r="4"/><circle cx="1517" cy="615" r="4"/><circle cx="1516" cy="625" r="4"/><circle cx="1511" cy="635" r="4"/><circle cx="1516" cy="636" r="4"/><circle cx="1495" cy="653" r="4"/><circle cx="1515" cy="655" r="4"/><circle cx="1515" cy="658" r="4"/>
                        <circle cx="1613" cy="738" r="4"/><circle cx="1617" cy="759" r="4"/><circle cx="1612" cy="762" r="4"/><circle cx="1636" cy="774" r="4"/><circle cx="1624" cy="926" r="4"/><circle cx="1634" cy="928" r="4"/><circle cx="1893" cy="720" r="4"/><circle cx="1911" cy="714" r="4"/>
                    </g>
                </svg>
                <div class="zoom-ctl">
                    <span class="zoom-btn">+</span>
                    <span class="zoom-btn">−</span>
                </div>
                <div class="layers-ctl">
                    <svg class="layers-ico" viewBox="0 0 26 26">
                        <path d="M13 15l11 5-11 5-11-5z" fill="#9a9a9a"/>
                        <path d="M13 9.500l11 5-11 5-11-5z" fill="#b5b5b5" stroke="#fff" stroke-width=".6"/>
                        <path d="M13 1l11 7-11 7L2 8z" fill="#d5d5d5" stroke="#fff" stroke-width=".6"/>
                    </svg>
                </div>
                <div class="attribution"><svg class="flag" viewBox="0 0 12 8"><rect width="12" height="4" fill="#4C7BE1"/><rect y="4" width="12" height="4" fill="#FFD500"/></svg><a>Leaflet</a> <span>|</span> © <a>OpenStreetMap</a></div>
            </div>
        </section>

        <footer class="status">
            <span class="cell c1">Total rows: 188 of 188</span>
            <span class="cell c2">Query complete 00:00:00.189</span>
            <span class="cell c3">Rows selected: 188</span>
            <span class="cursor-pos">Ln 1, Col 1</span>
        </footer>
    </main>
</div>

</body>
</html>
```
FILE: styles.css
```css
* {
    box-sizing: border-box;
}

html, body {
    margin: 0;
    height: 100%;
    overflow: hidden;
}

body {
    font-family: Roboto, "Liberation Sans", sans-serif;
    font-size: 14px;
    color: #222;
    background: #fff;
}

.defs {
    display: none;
}

button {
    font: inherit;
    padding: 0;
    margin: 0;
}

.app {
    display: flex;
    height: 992px;
    border-top: 1px solid #e6e8ec;
}

/* Object explorer */
.explorer {
    width: 441px;
    flex: none;
    display: flex;
    flex-direction: column;
    overflow: hidden;
}

.explorer-head {
    height: 32px;
    flex: none;
    display: flex;
    align-items: center;
    justify-content: space-between;
    padding: 0 0 0 10px;
    border-bottom: 1px solid #dde0e6;
}

.explorer-title {
    margin-top: -3px;
}

.explorer-tools {
    display: flex;
    gap: 5px;
    margin-top: 2px;
}

.tool {
    width: 25px;
    height: 24px;
    display: flex;
    align-items: center;
    justify-content: center;
    background: #fff;
    border: 1px solid #e6e8ee;
    border-radius: 5px;
}

.tool svg {
    width: 16px;
    height: 16px;
}

.explorer-body {
    flex: 1;
    display: flex;
    min-height: 0;
}

.tree {
    flex: 1;
    padding-top: 2px;
}

.row {
    height: 24px;
    display: flex;
    align-items: center;
    font-size: 13.400px;
    color: #3d3d3d;
    white-space: nowrap;
}

.chev {
    width: 10px;
    height: 10px;
    margin: 0 3px;
    flex: none;
}

.ico {
    width: 16px;
    height: 16px;
    margin: 0 5px 0 4px;
    flex: none;
}

.lv0 { padding-left: 9px; }
.lv1 { padding-left: 23px; }
.lv2 { padding-left: 39px; }
.lv3 { padding-left: 55px; }
.lv4 { padding-left: 71px; }
.lv5 { padding-left: 87px; }
.lv6 { padding-left: 103px; }
.lv7 { padding-left: 119px; }
.leaf { padding-left: 99px; }

/* indent guides, one gradient per level */
.lv1, .lv2, .lv3, .lv4, .lv5, .lv6, .lv7, .leaf {
    background-image:
        linear-gradient(#e9e9ee, #e9e9ee),
        linear-gradient(#e9e9ee, #e9e9ee),
        linear-gradient(#e9e9ee, #e9e9ee),
        linear-gradient(#e9e9ee, #e9e9ee),
        linear-gradient(#e9e9ee, #e9e9ee),
        linear-gradient(#e9e9ee, #e9e9ee),
        linear-gradient(#e9e9ee, #e9e9ee);
    background-repeat: no-repeat;
    background-size: 1px 100%;
}

.lv1 { background-position: 16px 0, -9px 0, -9px 0, -9px 0, -9px 0, -9px 0, -9px 0; }
.lv2 { background-position: 16px 0, 32px 0, -9px 0, -9px 0, -9px 0, -9px 0, -9px 0; }
.lv3 { background-position: 16px 0, 32px 0, 48px 0, -9px 0, -9px 0, -9px 0, -9px 0; }
.lv4 { background-position: 16px 0, 32px 0, 48px 0, 64px 0, -9px 0, -9px 0, -9px 0; }
.lv5, .leaf { background-position: 16px 0, 32px 0, 48px 0, 64px 0, 80px 0, -9px 0, -9px 0; }
.lv6 { background-position: 16px 0, 32px 0, 48px 0, 64px 0, 80px 0, 96px 0, -9px 0; }
.lv7 { background-position: 16px 0, 32px 0, 48px 0, 64px 0, 80px 0, 96px 0, 112px 0; }

.row.selected {
    background-color: #d6eefc;
    height: 26px;
    margin: -1px 0;
}

.scroll-thumb {
    width: 8px;
    flex: none;
    margin: 4px 0 8px;
    background: #c8cbd8;
    border-radius: 4px;
}

.splitter {
    width: 4px;
    flex: none;
    background: #eceef2;
    position: relative;
}

.splitter-mark {
    position: absolute;
    left: 1px;
    right: 0;
    top: 704px;
    height: 27px;
    background: #326690;
}

/* Right side */
.main {
    flex: 1;
    min-width: 0;
    display: flex;
    flex-direction: column;
}

.tabs {
    display: flex;
    align-items: stretch;
    flex: none;
    background: #fff;
    border-bottom: 1px solid #dde0e6;
    padding-left: 1px;
}

.tab {
    display: flex;
    align-items: center;
    padding: 0 10px;
    white-space: nowrap;
    border-bottom: 3px solid transparent;
    margin-bottom: -1px;
    color: #222;
}

.tab.active {
    color: #326690;
    border-bottom-color: #326690;
}

.top-tabs {
    height: 32px;
    letter-spacing: .15px;
}

.tab-ico {
    width: 14px;
    height: 14px;
    margin-right: 4px;
}

.top-close {
    margin-left: auto;
    margin-right: 9px;
    align-self: center;
    font-size: 14px;
    font-weight: 700;
    color: #111;
}

.tab-x {
    margin-left: 12px;
    font-size: 13px;
    color: #333;
}

/* Toolbars */
.toolbars {
    height: 67px;
    flex: none;
    background: #ebeef3;
    padding: 2px 5px 0 5px;
    display: flex;
    flex-direction: column;
    gap: 7px;
}

.conn-row {
    display: flex;
    justify-content: space-between;
    height: 27px;
    flex: none;
}

.conn {
    width: 514px;
    display: flex;
    align-items: stretch;
    background: #fff;
    border: 1px solid #d8dbe2;
    border-radius: 5px;
}

.conn-btn {
    width: 32px;
    border-right: 1px solid #d8dbe2;
    flex: none;
}

.conn-btn.right {
    border-right: 0;
    border-left: 1px solid #d8dbe2;
}

.conn-name {
    flex: 1;
    display: flex;
    align-items: center;
    padding-left: 8px;
    font-size: 14.800px;
    color: #333;
}

.btn {
    display: flex;
    align-items: center;
    justify-content: center;
    background: transparent;
    border: 0;
}

.refresh {
    width: 33px;
    background: #fff;
    border: 1px solid #d8dbe2;
    border-radius: 5px;
}

.i16 {
    width: 16px;
    height: 16px;
}

.i10 {
    width: 10px;
    height: 10px;
}

.tool-row {
    display: flex;
    height: 28px;
    flex: none;
    gap: 6px;
}

.group {
    display: flex;
    align-items: stretch;
    background: #eef0f4;
    border: 1px solid #dde0e6;
    border-radius: 5px;
}

.group .btn {
    width: 33px;
    border-right: 1px solid #dde0e6;
}

.group .btn:last-child {
    border-right: 0;
}

.group .btn.caret {
    width: 18px;
}

.group .btn.wide {
    width: 100%;
    gap: 2px;
}

.g1 { width: 84px; }
.g2 { width: 46px; }
.g4 { width: 84px; }
.g5 { width: 84px; }
.g6 { width: 65px; }
.g7 { width: 46px; }
.g8 { width: 32px; }

.lit {
    background: #fff;
}

.g3 {
    width: 53px;
    margin-left: -1px;
}

.blue {
    background: #326690;
    border-color: #326690;
    align-items: center;
    justify-content: space-between;
    padding: 0 6px 0 11px;
}

.limit {
    width: 108px;
    margin-left: -1px;
    background: #fff;
    border-radius: 5px;
    display: flex;
    align-items: center;
    justify-content: space-between;
    padding: 0 16px 0 11px;
    color: #333;
}

.limit-caret {
    width: 0;
    height: 0;
    border-left: 5px solid transparent;
    border-right: 5px solid transparent;
    border-top: 5px solid #222;
}

.stop {
    width: 12px;
    height: 12px;
    background: #707070;
    border-radius: 2px;
}

.e-box {
    width: 16px;
    height: 16px;
    background: #707070;
    color: #eef0f4;
    border-radius: 2px;
    font-size: 11px;
    font-weight: 700;
    line-height: 16px;
    text-align: center;
}

/* Query + scratch pad */
.query-area {
    height: 381px;
    flex: none;
    display: flex;
    border-bottom: 1px solid #dde0e6;
    border-top: 1px solid #dde0e6;
}

.query-pane {
    width: 1072px;
    flex: none;
    display: flex;
    flex-direction: column;
    border-right: 1px solid #dde0e6;
}

.scratch-pane {
    flex: 1;
    display: flex;
    flex-direction: column;
}

.pane-tabs {
    height: 31px;
}

.pane-tabs .tab {
    padding-left: 9px;
    padding-right: 9px;
}

.pane-tabs .tab + .tab {
    margin-left: 1px;
}

.expand {
    width: 16px;
    height: 16px;
    margin-left: auto;
    margin-right: 17px;
    align-self: center;
}

.editor {
    flex: 1;
    display: flex;
    min-height: 0;
}

.gutter {
    width: 42px;
    flex: none;
    background: #f3f5f9;
    padding: 5px 13px 0 0;
    text-align: right;
    font-family: "Liberation Mono", monospace;
    font-size: 13px;
    line-height: 20px;
    color: #333;
}

.code {
    margin: 0;
    padding: 5px 0 0 4px;
    font-family: "DejaVu Sans Mono", "Liberation Mono", monospace;
    font-size: 14.200px;
    line-height: 20px;
    color: #333;
}

.kw {
    color: #908;
    font-weight: 700;
}

.op {
    color: #666;
}

.id {
    color: #1a6fb0;
}

/* Results + map */
.result-area {
    flex: 1;
    min-height: 0;
    display: flex;
    flex-direction: column;
}

.result-tabs .tab {
    padding-left: 10px;
    padding-right: 10px;
    letter-spacing: .15px;
}

.result-tabs .tab + .tab {
    margin-left: 0;
}

.result-tabs .tab.active {
    color: #333;
}

.map {
    flex: 1;
    min-height: 0;
    position: relative;
    overflow: hidden;
}

.map-svg {
    display: block;
    width: 100%;
    height: 100%;
}

.residential path {
    fill: #e0dfdf;
    stroke: #d0cfcf;
}

.campus path {
    fill: #ffffe5;
    stroke: #f4f2b0;
}

.water path {
    fill: #aad3df;
}

.stream path {
    fill: none;
    stroke: #aad3df;
}

.road path {
    fill: none;
    stroke: #fff;
    stroke-linejoin: round;
    stroke-linecap: round;
}

.road.w5 path {
    stroke-width: 4.500;
}

.road.w4 path {
    stroke-width: 4;
}

.road-wide {
    fill: none;
    stroke: #b9b5ae;
    stroke-width: 11;
}

.road-wide-in {
    fill: none;
    stroke: #fff;
    stroke-width: 10;
}

.road-white {
    fill: none;
    stroke: #fff;
    stroke-width: 8;
    stroke-linecap: round;
}

.bridge {
    fill: none;
    stroke: #222;
    stroke-width: 1;
}

.trunk path {
    fill: none;
    stroke-linejoin: round;
}

.trunk-case {
    stroke: #b6b87a;
    stroke-width: 9.500;
}

.trunk-fill {
    stroke: #f7fabf;
    stroke-width: 8;
}

.trunk-case.thin {
    stroke-width: 6.500;
}

.trunk-fill.thin {
    stroke-width: 5;
}

.motorway {
    fill: #fbaf99;
    stroke: #e0806a;
    stroke-width: 1;
}

.mw-arrows path {
    fill: none;
    stroke: #6b2a1a;
    stroke-width: 1;
}

.trunk-link {
    fill: none;
    stroke: #6b5a3a;
    stroke-width: 13;
}

.trunk-link-in {
    fill: none;
    stroke: #fcd6a4;
    stroke-width: 11;
}

.rail {
    fill: none;
    stroke: #707070;
    stroke-width: 5;
}

.rail-dash {
    fill: none;
    stroke: #eeeeee;
    stroke-width: 2;
    stroke-dasharray: 6 6;
}

.lbl {
    font-family: "Noto Sans CJK SC", "Noto Sans", sans-serif;
    font-size: 10px;
    text-anchor: middle;
}

.lbl.gray { fill: #777; }
.lbl.school { fill: #6b6b3d; }
.lbl.dark { fill: #333; }
.lbl.brown { fill: #8b6b45; }
.lbl.red { fill: #c8102e; }
.lbl.rail-lbl { fill: #888; }

.markers circle {
    fill: #3388ff;
    fill-opacity: .2;
    stroke: #3388ff;
    stroke-width: 2;
}

.zoom-ctl {
    position: absolute;
    left: 11px;
    top: 11px;
    width: 34px;
    border: 2px solid rgba(0, 0, 0, .2);
    border-radius: 4px;
    background-clip: padding-box;
}

.zoom-btn {
    display: block;
    height: 30px;
    background: #fff;
    text-align: center;
    font-family: "DejaVu Sans Mono", monospace;
    font-size: 22px;
    font-weight: 700;
    line-height: 30px;
    color: #111;
}

.zoom-btn:first-child {
    border-bottom: 1px solid #ccc;
    border-radius: 2px 2px 0 0;
}

.zoom-btn:last-child {
    border-radius: 0 0 2px 2px;
}

.layers-ctl {
    position: absolute;
    right: 11px;
    top: 11px;
    width: 47px;
    height: 46px;
    background: #fff;
    border: 2px solid rgba(0, 0, 0, .2);
    border-radius: 5px;
    display: flex;
    align-items: center;
    justify-content: center;
}

.layers-ico {
    width: 27px;
    height: 27px;
}

.attribution {
    position: absolute;
    right: 0;
    bottom: 0;
    height: 16px;
    padding: 0 5px;
    background: rgba(255, 255, 255, .8);
    font-size: 12px;
    line-height: 16px;
    color: #333;
    display: flex;
    align-items: center;
    gap: 3px;
}

.attribution a {
    color: #0078a8;
}

.flag {
    width: 12px;
    height: 8px;
    margin-right: 1px;
}

/* Status bar */
.status {
    height: 24px;
    flex: none;
    display: flex;
    align-items: center;
    background: #ebeef3;
    border-top: 1px solid #dde0e6;
    color: #222;
}

.cell {
    height: 100%;
    display: flex;
    align-items: center;
    padding-left: 12px;
    border-right: 1px solid #dde0e6;
}

.c1 { width: 167px; letter-spacing: .15px; }
.c2 { width: 213px; }
.c3 { width: 148px; }

.cursor-pos {
    margin-left: auto;
    margin-right: 15px;
}
```
